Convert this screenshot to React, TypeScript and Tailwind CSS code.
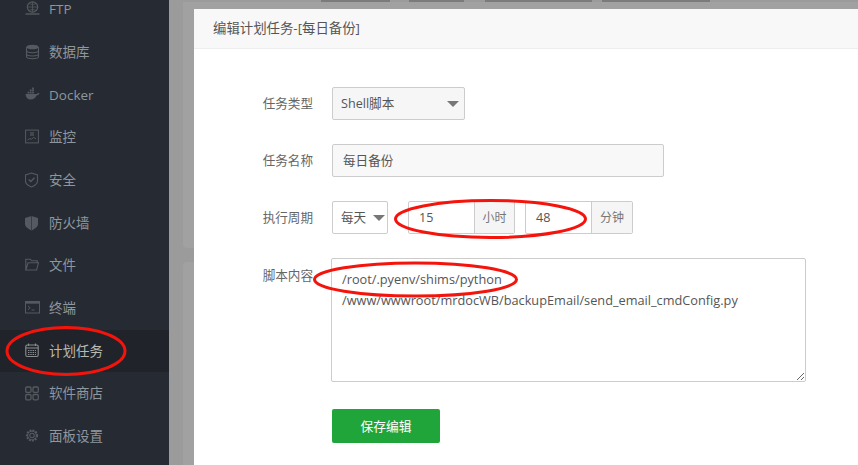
const FONT = '[font-family:"Open_Sans","Noto_Sans_CJK_SC",sans-serif]'

const ICONS: Record<string, React.ReactNode> = {
  ftp: (
    <>
      <circle cx="7.5" cy="6" r="5.2" fill="none" stroke="currentColor" strokeWidth="1.2" />
      <path d="M2.5 6h10M7.5 1v10M4 2.5c2 1.2 5 1.2 7 0M4 9.5c2-1.2 5-1.2 7 0" fill="none" stroke="currentColor" strokeWidth=".8" />
      <path d="M0.5 13h14" stroke="currentColor" strokeWidth="1.4" />
    </>
  ),
  db: (
    <>
      <ellipse cx="7.5" cy="3" rx="6" ry="2.3" fill="currentColor" />
      <path d="M1.5 3v9.5c0 1.3 2.7 2.2 6 2.2s6-.9 6-2.2V3" fill="none" stroke="currentColor" strokeWidth="1.1" />
      <path d="M1.5 6.6c0 1.3 2.7 2.2 6 2.2s6-.9 6-2.2M1.5 9.8c0 1.3 2.7 2.2 6 2.2s6-.9 6-2.2" fill="none" stroke="currentColor" strokeWidth="1.1" />
    </>
  ),
  docker: (
    <>
      <path d="M0.5 7h11.3c.5-.9 1.6-1.1 2.7-.7-.6 1.4-1.6 2-2.9 2.1C10.400 11 8.500 12.500 5.500 12.500 2.500 12.500.8 10.500.5 7z" fill="currentColor" />
      <path d="M2.500 4.800h1.800v1.700H2.500zM4.800 4.800h1.800v1.700H4.800zM7.100 4.800h1.800v1.700H7.100zM4.800 2.600h1.800v1.700H4.800zM7.100 2.600h1.800v1.700H7.100zM7.100.5h1.800v1.700H7.100z" fill="currentColor" />
    </>
  ),
  monitor: (
    <>
      <rect x=".6" y="1.100" width="12.800" height="12.800" fill="none" stroke="currentColor" strokeWidth="1" />
      <path d="M2.500 11l2.500-1.500 1.500.8 2-2 2.500 1.500" fill="none" stroke="currentColor" strokeWidth=".9" />
      <rect x="5" y="3" width="4" height="4" fill="currentColor" opacity=".6" />
    </>
  ),
  shield: (
    <>
      <path d="M6.500 1L12.500 3v6c0 3-3.500 5-6 6-2.500-1-6-3-6-6V3z" fill="none" stroke="currentColor" strokeWidth="1.100" />
      <path d="M3.800 7.500l2 2 3.700-3.700" fill="none" stroke="currentColor" strokeWidth="1.400" />
    </>
  ),
  wall: (
    <>
      <path d="M6.500 1L13 3v6c0 3-3.500 5-6.500 6.500C3.500 14 0 12 0 9V3z" fill="currentColor" />
      <path d="M6.500 1v14.500" stroke="#262b33" strokeWidth=".6" />
    </>
  ),
  folder: (
    <path d="M.8 13V2.200h4.400l1.500 1.600h5.500v2M.8 13l2.300-7.200h10.400L11.600 13z" fill="none" stroke="currentColor" strokeWidth="1.100" />
  ),
  term: (
    <>
      <rect x=".5" y="1.500" width="14" height="11.500" fill="none" stroke="currentColor" strokeWidth="1" />
      <rect x=".5" y="1.500" width="14" height="2.200" fill="currentColor" />
      <path d="M3 6l2.200 1.800L3 9.600M6.500 10h3" fill="none" stroke="currentColor" strokeWidth="1" />
    </>
  ),
  cal: (
    <>
      <rect x=".8" y="2" width="12.400" height="11.500" rx="1.500" fill="none" stroke="currentColor" strokeWidth="1.100" />
      <path d="M3.500.5v2.500M10.500.5v2.500M.8 5h12.400" stroke="currentColor" strokeWidth="1.100" />
      <path d="M3 7.500h8M3 9.500h8M3 11.500h8" stroke="currentColor" strokeWidth="1" strokeDasharray="1.400 .9" />
    </>
  ),
  apps: (
    <g fill="none" stroke="currentColor" strokeWidth="1.300">
      <rect x=".7" y="1" width="5.300" height="5.300" rx="1.200" />
      <rect x="8" y="1" width="5.300" height="5.300" rx="1.200" />
      <rect x=".7" y="8.500" width="5.300" height="5.300" rx="1.200" />
      <rect x="8" y="8.500" width="5.300" height="5.300" rx="1.200" />
    </g>
  ),
  gear: (
    <>
      <circle cx="7" cy="7.500" r="2.200" fill="none" stroke="currentColor" strokeWidth="1.100" />
      <circle cx="7" cy="7.500" r="5" fill="none" stroke="currentColor" strokeWidth="2.200" strokeDasharray="1.800 1.130" />
      <circle cx="7" cy="7.500" r="4.400" fill="none" stroke="currentColor" strokeWidth=".9" />
    </>
  ),
}

const NAV = [
  { icon: 'ftp', label: 'FTP' },
  { icon: 'db', label: '数据库' },
  { icon: 'docker', label: 'Docker' },
  { icon: 'monitor', label: '监控' },
  { icon: 'shield', label: '安全' },
  { icon: 'wall', label: '防火墙' },
  { icon: 'folder', label: '文件' },
  { icon: 'term', label: '终端' },
  { icon: 'cal', label: '计划任务', active: true },
  { icon: 'apps', label: '软件商店' },
  { icon: 'gear', label: '面板设置' },
]

function Caret() {
  return <span className="h-0 w-0 border-x-[6px] border-t-[6px] border-x-transparent border-t-[#777]" />
}

function Unit({ value, unit, inputW, unitW }: { value: string; unit: string; inputW: string; unitW: string }) {
  return (
    <div className="flex h-[33px] rounded-[2px] border border-[#ccc]">
      <div className={`flex items-center pl-[10px] pt-px text-[#555] ${inputW}`}>{value}</div>
      <div className={`flex items-center justify-center border-l border-[#ccc] bg-[#f5f5f5] pt-px text-[12px] text-[#777] ${unitW}`}>{unit}</div>
    </div>
  )
}

function Row({ label, children, className }: { label: string; children: React.ReactNode; className: string }) {
  return (
    <div className={`flex ${className}`}>
      <div className="w-[119px] pr-[19px] pt-px text-right text-[#666]">{label}</div>
      {children}
    </div>
  )
}

export default function App() {
  return (
    <div className={`relative flex h-[465px] w-[858px] overflow-hidden bg-[#9b9b9b] text-[12.6px] ${FONT}`}>
      <aside className="-mt-3 w-[169px] shrink-0 bg-[#262b33] text-[13.5px] text-[#8f969d]">
        {NAV.map((n) => (
          <div
            key={n.label}
            className={`flex h-[42.7px] items-center pl-[25px] ${n.active ? 'bg-[#20242a] text-[#b9b9b4]' : ''}`}
          >
            <svg
              viewBox="0 0 15 16"
              className={`mr-[9px] h-[16px] w-[15px] shrink-0 ${n.active ? 'text-[#8b8e90]' : 'text-[#555a60]'}`}
            >
              {ICONS[n.icon]}
            </svg>
            {n.label}
          </div>
        ))}
      </aside>

      {/* page dimmed behind the dialog */}
      <div className="flex-1 pl-[14px]">
        <div className="flex h-[2px] pl-[138px]">
          <span className="ml-0 w-[69px] bg-[#7b7b7b]" />
          <span className="ml-[19px] w-[55px] bg-[#7b7b7b]" />
          <span className="ml-[21px] w-[107px] bg-[#7b7b7b]" />
          <span className="ml-[10px] w-[108px] bg-[#7b7b7b]" />
        </div>
        <div className="h-[246px] rounded-b-[4px] bg-[#a1a1a1]" />
        <div className="mt-[14px] h-[203px] rounded-t-[4px] bg-[#a1a1a1]" />
      </div>

      {/* dialog */}
      <div className="absolute bottom-0 left-[194px] right-0 top-[9px] bg-white">
        <div className="flex h-[40px] items-center border-b border-[#eee] bg-[#f8f8f8] pl-[19px] text-[13.4px] text-[#555]">
          编辑计划任务-[每日备份]
        </div>
        <div className="pl-[19px]">
          <Row label="任务类型" className="mt-[38px] h-[33px] items-center">
            <div className="flex h-[33px] w-[133px] items-center justify-between rounded-[2px] border border-[#ccc] bg-[#f6f6f6] pl-[8px] pr-[5px] pt-px text-[#555]">
              Shell脚本
              <Caret />
            </div>
          </Row>
          <Row label="任务名称" className="mt-[24px] h-[33px] items-center">
            <div className="flex h-[33px] w-[332px] items-center rounded-[2px] border border-[#ccc] bg-[#f8f8f8] pl-[10px] pt-px text-[#555]">
              每日备份
            </div>
          </Row>
          <Row label="执行周期" className="mt-[24px] h-[33px] items-center">
            <div className="flex h-[33px] w-[56px] items-center justify-between rounded-[2px] border border-[#ccc] pl-[8px] pr-[2px] pt-px text-[#555]">
              每天
              <Caret />
            </div>
            <div className="ml-[20px] flex gap-[10px]">
              <Unit value="15" unit="小时" inputW="w-[65px]" unitW="w-[40px]" />
              <Unit value="48" unit="分钟" inputW="w-[65px]" unitW="w-[41px]" />
            </div>
          </Row>
          <Row label="脚本内容" className="mt-[24px] pt-[8px]">
            <textarea
              readOnly
              className="-ml-px -mt-[8px] h-[124px] w-[475px] rounded-[2px] border border-[#ccc] px-[10px] pt-[10px] text-[12.75px] leading-[21px] text-[#555] outline-none"
              defaultValue={'/root/.pyenv/shims/python\n/www/wwwroot/mrdocWB/backupEmail/send_email_cmdConfig.py'}
            />
          </Row>
          <button className="ml-[119px] mt-[27px] h-[34px] w-[108px] rounded-[2px] bg-[#20a53a] pt-px text-[12.75px] text-white">
            保存编辑
          </button>
        </div>
      </div>

      {/* red marker circles drawn over the screenshot */}
      <svg className="pointer-events-none absolute inset-0 h-[465px] w-[858px]" viewBox="0 0 858 465">
        <g fill="none" stroke="#f5140c" strokeWidth="3">
          <ellipse cx="66" cy="351" rx="59" ry="23.500" />
          <ellipse cx="490.500" cy="219" rx="95" ry="18.500" />
          <ellipse cx="415.500" cy="279.500" rx="101" ry="16.500" />
        </g>
      </svg>
    </div>
  )
}
